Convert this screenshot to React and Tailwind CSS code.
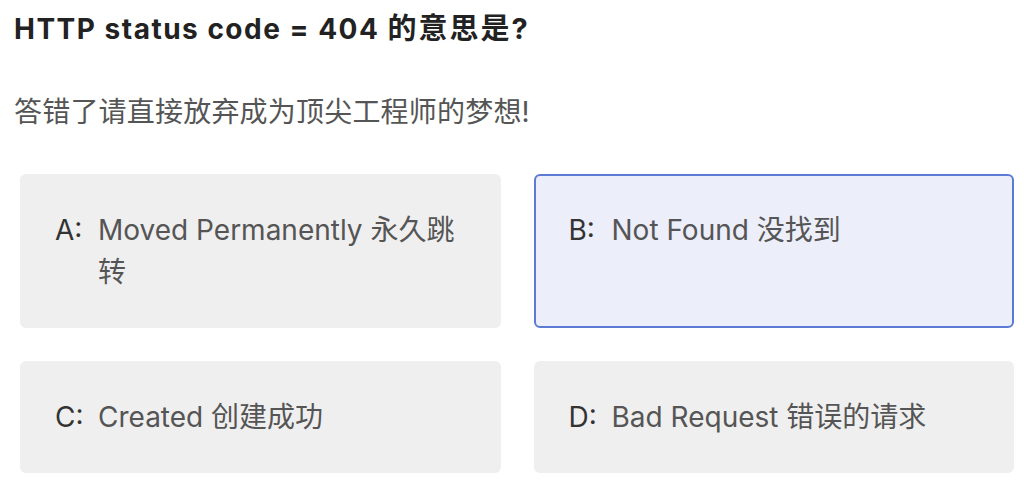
import React from 'react';

const options = [
  { key: 'A', text: 'Moved Permanently 永久跳转' },
  { key: 'B', text: 'Not Found 没找到', selected: true },
  { key: 'C', text: 'Created 创建成功' },
  { key: 'D', text: 'Bad Request 错误的请求' },
];

const App = () => {
  return (
    <div
      className="w-[1036px] h-[488px] bg-white overflow-hidden pl-[14px] pr-[22px] pt-[11px]"
      style={{ fontFamily: 'Inter, "Noto Sans CJK SC", sans-serif' }}
    >
      <h1 className="text-[28px] leading-[36px] font-bold tracking-[1.5px] text-[#222]">
        HTTP status code = 404 <span className="text-[29px] tracking-[2px]">的意思是?</span>
      </h1>
      <p className="mt-[47px] text-[28px] leading-[36px] tracking-[0.2px] text-[#555]">答错了请直接放弃成为顶尖工程师的梦想!</p>

      <div className="mt-[44px] ml-[6px] grid grid-cols-2 gap-x-[33px] gap-y-[33px]">
        {options.map((opt) => (
          <div
            key={opt.key}
            className={
              opt.selected
                ? 'rounded-[6px] border-2 border-[#5b7bd5] bg-[#eceef9] px-[33px] pt-[33px] pb-[33px]'
                : 'rounded-[6px] border-2 border-transparent bg-[#efefef] px-[33px] pt-[33px] pb-[33px]'
            }
          >
            <div className="flex text-[28px] leading-[42px]">
              <span className="text-[#333] w-[43px] shrink-0">{opt.key}:</span>
              <span className="text-[#555] pr-[10px]">{opt.text}</span>
            </div>
          </div>
        ))}
      </div>
    </div>
  );
};

export default App;
